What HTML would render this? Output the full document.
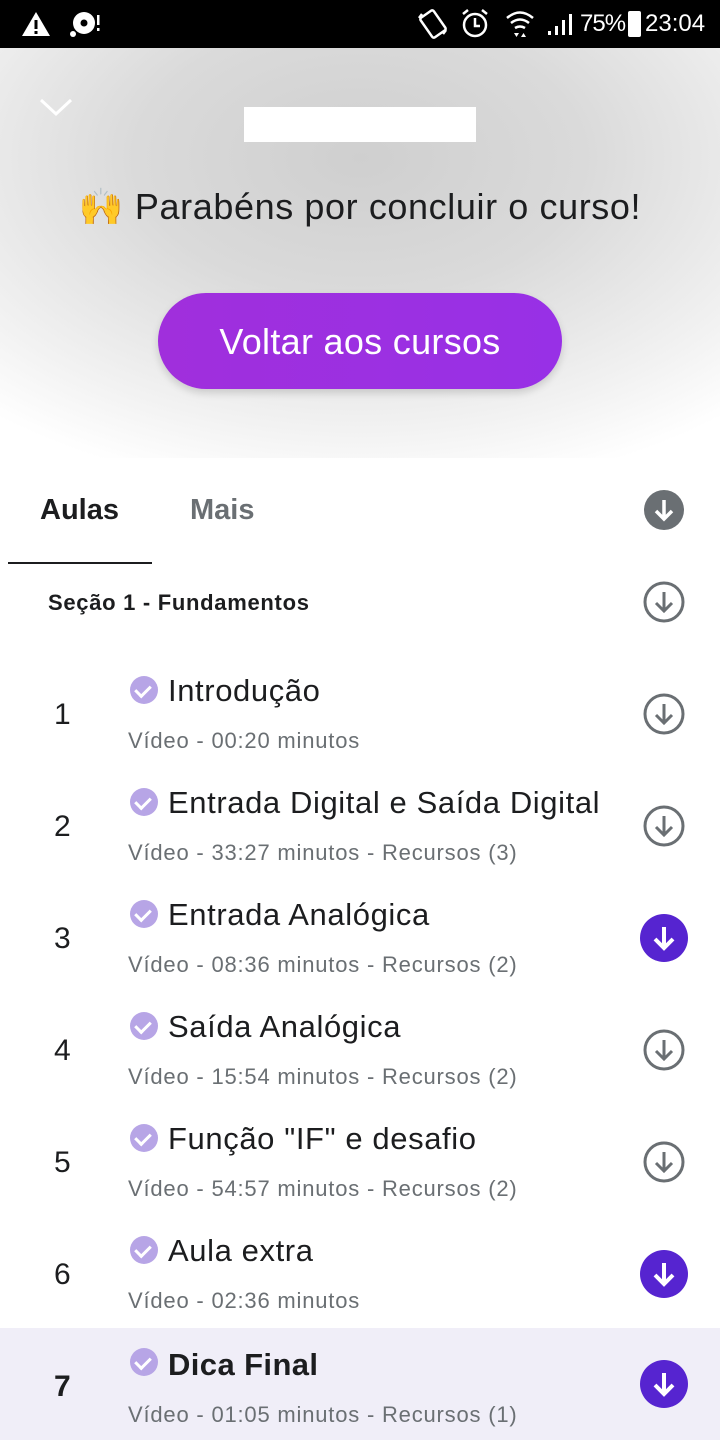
<!DOCTYPE html>
<html><head><meta charset="utf-8"><style>
*{margin:0;padding:0;box-sizing:border-box}
body{width:720px;height:1440px;overflow:hidden;font-family:"Liberation Sans","DejaVu Sans",sans-serif;background:#fff;position:relative;color:#1c1d1f}
.sb{position:absolute;top:0;left:0;width:720px;height:48px;background:#000;color:#fff}
.hdr{position:absolute;top:48px;left:0;width:720px;height:410px;background:radial-gradient(ellipse 560px 340px at 360px 110px,#cfcfcf 0%,#dadada 40%,#f2f2f2 80%,#fff 100%)}
.abs{position:absolute}
.btn{position:absolute;left:158px;top:293px;width:404px;height:96px;border-radius:48px;background:linear-gradient(90deg,#a02fdc,#9830e6);color:#fff;font-size:36px;letter-spacing:0.3px;text-align:center;line-height:98px;box-shadow:0 4px 8px rgba(0,0,0,.15)}
.row{position:absolute;left:0;width:720px;height:112px}
.num{position:absolute;left:54px;top:40px;font-size:30px}
.chk{position:absolute;left:130px;top:18px;width:28px;height:28px;border-radius:50%;background:#b7a5e6}
.t{position:absolute;left:168px;top:15px;font-size:31px;letter-spacing:0.6px;white-space:nowrap}
.s{position:absolute;left:128px;top:70px;font-size:22px;letter-spacing:0.8px;color:#6a6f73;white-space:nowrap}
.dl{position:absolute;left:640px;top:32px;width:48px;height:48px}
.chk::after{content:"";position:absolute;left:8px;top:6px;width:7px;height:12px;border:solid #fff;border-width:0 3px 3px 0;transform:rotate(45deg)}
</style></head><body>
<div class="sb">
<svg class="abs" style="left:20px;top:10px" width="32" height="28" viewBox="0 0 32 28"><path d="M16 2L30 26H2Z" fill="#fff"/><rect x="14.5" y="10" width="3" height="9" fill="#000"/><rect x="14.5" y="21" width="3" height="3" fill="#000"/></svg>
<svg class="abs" style="left:68px;top:10px" width="34" height="28" viewBox="0 0 34 28"><circle cx="16" cy="13" r="11" fill="#fff"/><circle cx="16" cy="13" r="3.5" fill="#000"/><circle cx="5" cy="24" r="3" fill="#fff"/><rect x="29" y="5" width="2.5" height="10" fill="#fff"/><rect x="29" y="18" width="2.5" height="3" fill="#fff"/></svg>
<svg class="abs" style="left:416px;top:8px" width="34" height="32" viewBox="0 0 34 32" fill="none" stroke="#fff" stroke-width="2.5"><rect x="9" y="4" width="16" height="24" rx="2" transform="rotate(-35 17 16)"/><path d="M3 10l3 -4M30 22l-3 4"/></svg>
<svg class="abs" style="left:460px;top:8px" width="30" height="32" viewBox="0 0 30 32" fill="none" stroke="#fff" stroke-width="2.5"><circle cx="15" cy="17" r="11"/><path d="M15 10v8h5M3 6l5-4M27 6l-5-4"/></svg>
<svg class="abs" style="left:504px;top:8px" width="32" height="32" viewBox="0 0 32 32" fill="none" stroke="#fff" stroke-width="2.5"><path d="M3 10q13-11 26 0M7 15q9-7 18 0M11 20q5-3 10 0"/><path d="M10 25h5l-2.5 4zM17 29h5l-2.5-4z" fill="#fff" stroke="none"/></svg>
<svg class="abs" style="left:548px;top:12px" width="28" height="24" viewBox="0 0 28 24" fill="#fff"><rect x="0" y="19" width="3" height="4"/><rect x="7" y="14" width="3" height="9"/><rect x="14" y="8" width="3" height="15"/><rect x="21" y="2" width="3" height="21"/></svg>
<div class="abs" style="left:580px;top:10px;font-size:24px;letter-spacing:-1px">75%</div>
<div class="abs" style="left:628px;top:11px;width:13px;height:26px;background:#fff;border-radius:2px"></div>
<div class="abs" style="left:645px;top:10px;font-size:24px">23:04</div>
</div>
<div class="hdr"></div>
<svg class="abs" style="left:38px;top:96px" width="36" height="22" viewBox="0 0 36 22" fill="none" stroke="#fff" stroke-width="3"><path d="M3 4l15 14L33 4"/></svg>
<div class="abs" style="left:244px;top:107px;width:232px;height:35px;background:#fff"></div>
<div class="abs" style="left:0;top:186px;width:720px;text-align:center;font-size:36px;letter-spacing:0.6px">🙌 Parabéns por concluir o curso!</div>
<div class="btn">Voltar aos cursos</div>
<div class="abs" style="left:40px;top:494px;font-size:29px;font-weight:bold">Aulas</div>
<div class="abs" style="left:190px;top:494px;font-size:29px;font-weight:bold;color:#6a6f73">Mais</div>
<div class="abs" style="left:8px;top:562px;width:144px;height:2px;background:#1c1d1f"></div>
<svg class="abs" style="left:644px;top:490px" width="40" height="40" viewBox="0 0 40 40"><circle cx="20" cy="20" r="20" fill="#6a6f73"/><path d="M20 10v19M12 21l8 8 8-8" stroke="#fff" stroke-width="3.5" fill="none"/></svg>
<div class="abs" style="left:48px;top:590px;font-size:22px;letter-spacing:0.7px;font-weight:bold">Seção 1 - Fundamentos</div>
<svg class="abs" style="left:642px;top:580px" width="44" height="44" viewBox="0 0 44 44"><circle cx="22" cy="22" r="19" fill="none" stroke="#6a6f73" stroke-width="3"/><path d="M22 12v19M14 23l8 8 8-8" stroke="#6a6f73" stroke-width="3" fill="none"/></svg>

<div class="row" style="top:658px"><div class="num">1</div><div class="chk"></div><div class="t">Introdução</div><div class="s">Vídeo - 00:20 minutos</div><svg class="dl" viewBox="0 0 48 48"><circle cx="24" cy="24" r="19" fill="none" stroke="#6a6f73" stroke-width="3"/><path d="M24 14v19M16 25l8 8 8-8" stroke="#6a6f73" stroke-width="3" fill="none"/></svg></div>
<div class="row" style="top:770px"><div class="num">2</div><div class="chk"></div><div class="t">Entrada Digital e Saída Digital</div><div class="s">Vídeo - 33:27 minutos - Recursos (3)</div><svg class="dl" viewBox="0 0 48 48"><circle cx="24" cy="24" r="19" fill="none" stroke="#6a6f73" stroke-width="3"/><path d="M24 14v19M16 25l8 8 8-8" stroke="#6a6f73" stroke-width="3" fill="none"/></svg></div>
<div class="row" style="top:882px"><div class="num">3</div><div class="chk"></div><div class="t">Entrada Analógica</div><div class="s">Vídeo - 08:36 minutos - Recursos (2)</div><svg class="dl" viewBox="0 0 48 48"><circle cx="24" cy="24" r="24" fill="#5624d0"/><path d="M24 13v20M15 25l9 9 9-9" stroke="#fff" stroke-width="4" fill="none"/></svg></div>
<div class="row" style="top:994px"><div class="num">4</div><div class="chk"></div><div class="t">Saída Analógica</div><div class="s">Vídeo - 15:54 minutos - Recursos (2)</div><svg class="dl" viewBox="0 0 48 48"><circle cx="24" cy="24" r="19" fill="none" stroke="#6a6f73" stroke-width="3"/><path d="M24 14v19M16 25l8 8 8-8" stroke="#6a6f73" stroke-width="3" fill="none"/></svg></div>
<div class="row" style="top:1106px"><div class="num">5</div><div class="chk"></div><div class="t">Função "IF" e desafio</div><div class="s">Vídeo - 54:57 minutos - Recursos (2)</div><svg class="dl" viewBox="0 0 48 48"><circle cx="24" cy="24" r="19" fill="none" stroke="#6a6f73" stroke-width="3"/><path d="M24 14v19M16 25l8 8 8-8" stroke="#6a6f73" stroke-width="3" fill="none"/></svg></div>
<div class="row" style="top:1218px"><div class="num">6</div><div class="chk"></div><div class="t">Aula extra</div><div class="s">Vídeo - 02:36 minutos</div><svg class="dl" viewBox="0 0 48 48"><circle cx="24" cy="24" r="24" fill="#5624d0"/><path d="M24 13v20M15 25l9 9 9-9" stroke="#fff" stroke-width="4" fill="none"/></svg></div>
<div class="row" style="top:1328px;background:#f0eef8"><div class="num" style="font-weight:bold;top:42px">7</div><div class="chk" style="top:20px"></div><div class="t" style="font-weight:bold;top:19px;letter-spacing:0.4px">Dica Final</div><div class="s" style="top:74px">Vídeo - 01:05 minutos - Recursos (1)</div><svg class="dl" viewBox="0 0 48 48"><circle cx="24" cy="24" r="24" fill="#5624d0"/><path d="M24 13v20M15 25l9 9 9-9" stroke="#fff" stroke-width="4" fill="none"/></svg></div>
</body></html>
